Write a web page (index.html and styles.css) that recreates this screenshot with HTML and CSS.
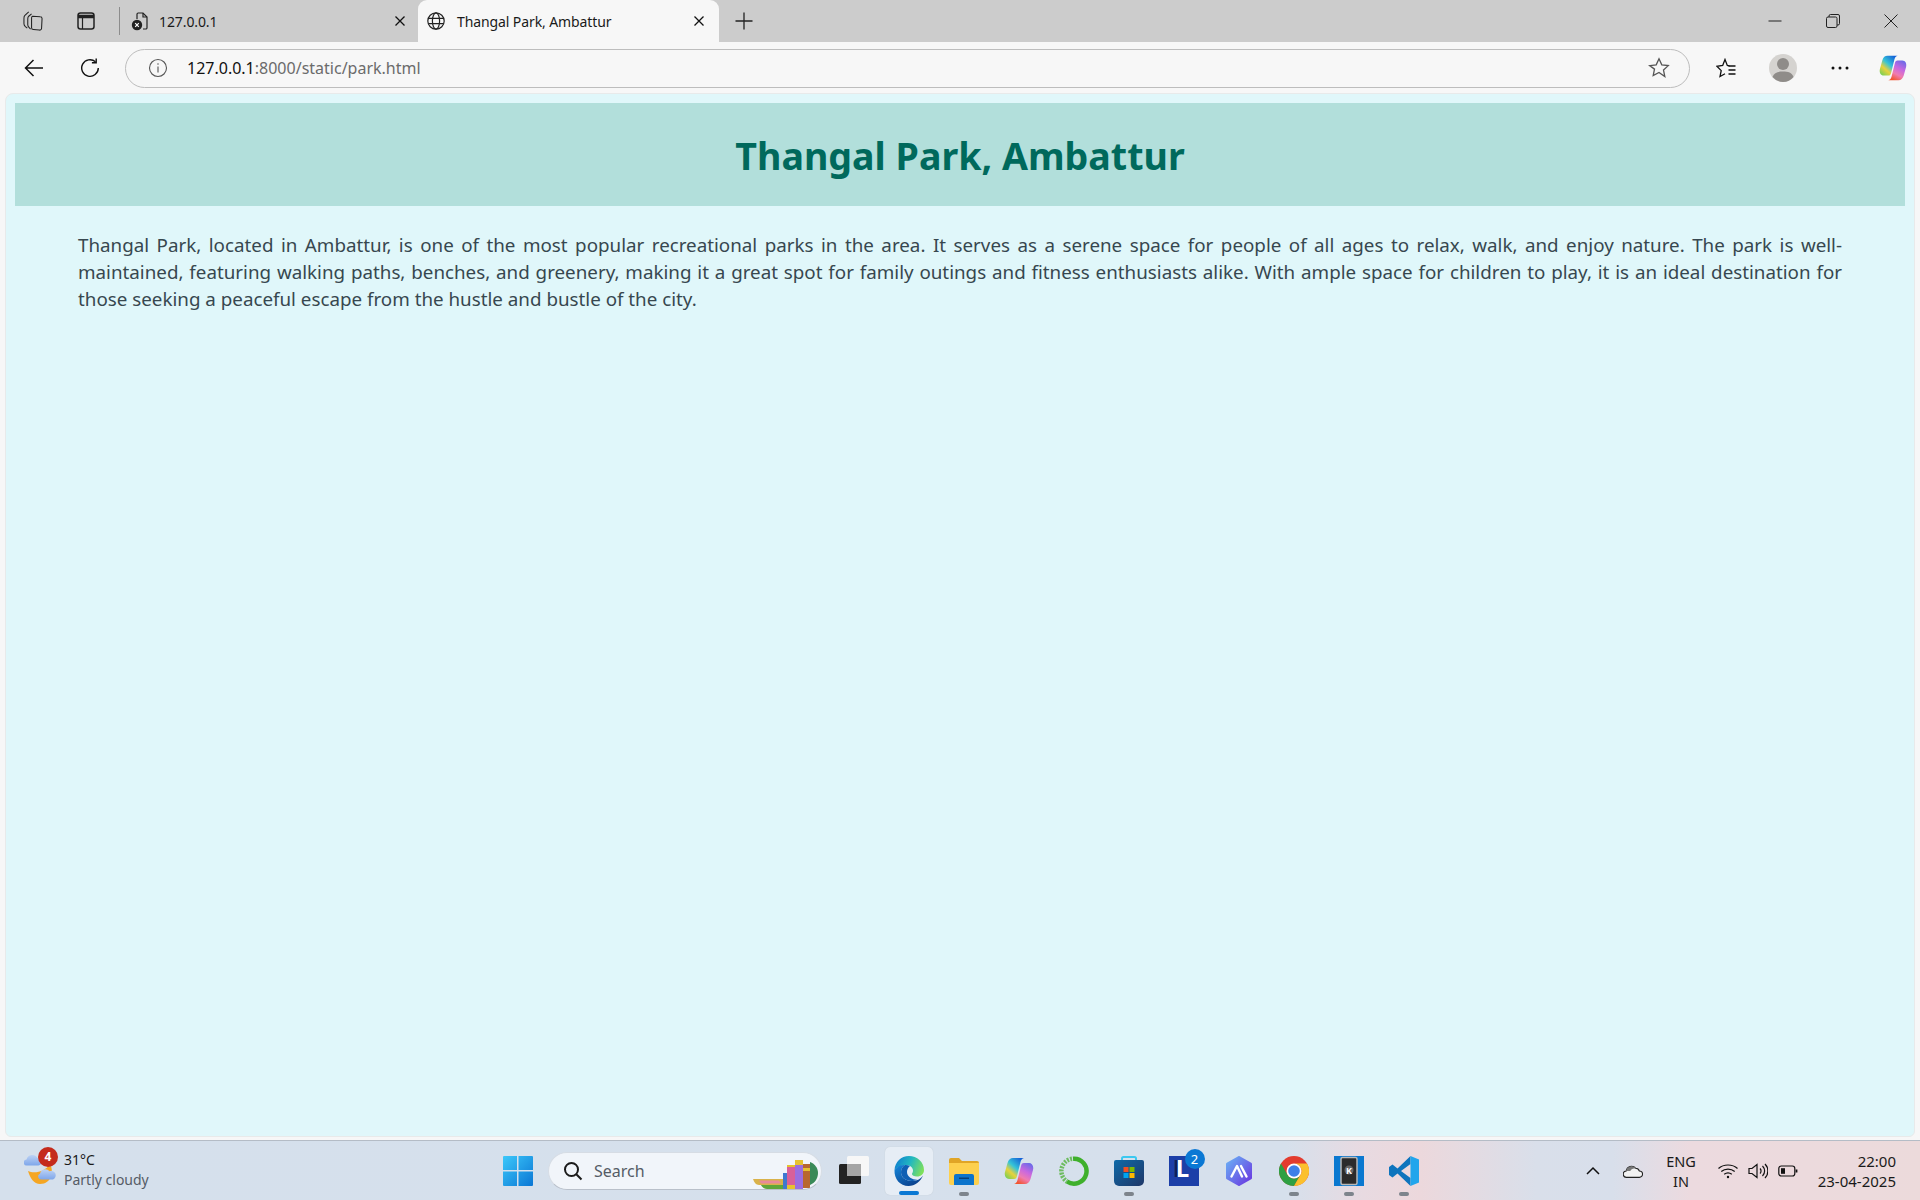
FILE: index.html
```html
<!DOCTYPE html>
<html lang="en">
<head>
<meta charset="utf-8">
<title>Thangal Park, Ambattur</title>
<link rel="stylesheet" href="styles.css">
</head>
<body>
<div class="tabstrip">
  <div class="strip-btn first"><svg class="i20" viewBox="0 0 21 21" fill="none" stroke="#222" stroke-width="1.100"><path d="M10 5.500 18 6a2 2 0 0 1 2 2l-.5 10a2 2 0 0 1-2.500 2l-6-.5a2 2 0 0 1-2-2V7.500a2 2 0 0 1 1-2z"/><path d="M9 3 6 5.500c-1 1-1 1.500-1 3v6c0 1.500.5 2 1.500 3L8 19"/><path d="M6 1 2 4.500C1 5.500 1 6 1 7.500v6c0 1.500.5 2 1.500 3l2 1.500"/></svg></div>
  <div class="strip-btn second"><svg class="i20" viewBox="0 0 20 20" fill="none" stroke="#222" stroke-width="1.500"><rect x="2" y="2" width="16" height="16" rx="2.500"/><path d="M2 5.500h16" stroke-width="3.500"/><path d="M6.500 6v12" stroke-width="1.200"/></svg></div>
  <div class="divider"></div>
  <div class="tab">
    <svg class="i20" viewBox="0 0 20 20" fill="none" stroke="#222" stroke-width="1.200"><path d="M6 8V3.200A1.200 1.200 0 0 1 7.200 2H12l4 4v10.800a1.200 1.200 0 0 1-1.200 1.200H12"/><path d="M12 2v4h4"/><circle cx="6" cy="14" r="5.200" fill="#222" stroke="none"/><path d="m4.200 12.200 3.600 3.600m0-3.600-3.600 3.600" stroke="#fff"/></svg>
    <span class="tab-title">127.0.0.1</span>
    <svg class="tab-x" viewBox="0 0 12 12" fill="none" stroke="#111" stroke-width="1.300"><path d="m1.500 1.500 9 9m0-9-9 9"/></svg>
  </div>
  <div class="tab active">
    <svg class="i20" viewBox="0 0 20 20" fill="none" stroke="#222" stroke-width="1.200"><circle cx="10" cy="10" r="8.200"/><ellipse cx="10" cy="10" rx="3.600" ry="8.200"/><path d="M2.300 7.400h15.400M2.300 12.600h15.400"/></svg>
    <span class="tab-title">Thangal Park, Ambattur</span>
    <svg class="tab-x" viewBox="0 0 12 12" fill="none" stroke="#111" stroke-width="1.300"><path d="m1.500 1.500 9 9m0-9-9 9"/></svg>
  </div>
  <div class="new-tab"><svg class="i20" viewBox="0 0 20 20" fill="none" stroke="#222" stroke-width="1.300"><path d="M10 1.500v17M1.500 10h17"/></svg></div>
  <div class="window-controls">
    <div class="win-btn"><svg class="i14" viewBox="0 0 14 14" fill="none" stroke="#222" stroke-width="1"><path d="M0.500 7h13"/></svg></div>
    <div class="win-btn"><svg class="i14" viewBox="0 0 14 14" fill="none" stroke="#222" stroke-width="1"><rect x="0.500" y="3" width="10.500" height="10.500" rx="1.500"/><path d="M3 3V2a1.500 1.500 0 0 1 1.500-1.500h7.500A1.500 1.500 0 0 1 13.500 2v7.500A1.500 1.500 0 0 1 12 11h-1"/></svg></div>
    <div class="win-btn"><svg class="i14" viewBox="0 0 14 14" fill="none" stroke="#222" stroke-width="1"><path d="m0.500 0.500 13 13m0-13-13 13"/></svg></div>
  </div>
</div>

<div class="toolbar">
  <div class="tool-btn"><svg class="i20" viewBox="0 0 20 20" fill="none" stroke="#111" stroke-width="1.500"><path d="M19 10H1.500M9.500 2 1.500 10l8 8"/></svg></div>
  <div class="tool-btn"><svg class="i20" viewBox="0 0 20 20" fill="none" stroke="#111" stroke-width="1.400"><path d="M15.500 3.800A8.300 8.300 0 1 0 18.300 10"/><path d="M16.200 0.500v4.300h-4.300"/></svg></div>
  <div class="address">
    <svg class="info" viewBox="0 0 20 20" fill="none" stroke="#555" stroke-width="1.100"><circle cx="10" cy="10" r="8.500"/><path d="M10 8.500v6M10 5.200v1.600"/></svg>
    <span class="url"><span class="host">127.0.0.1</span>:8000/static/park.html</span>
    <svg class="addr-star" viewBox="0 0 22 22" fill="none" stroke="#555" stroke-width="1.300"><path d="m11 1.800 2.800 6 6.500.8-4.800 4.500 1.300 6.500L11 15.400l-5.800 3.200 1.300-6.500L1.700 8.600l6.500-.8z"/></svg>
  </div>
  <div class="tool-right first-right"><svg class="i20" viewBox="0 0 20 20" fill="none" stroke="#111" stroke-width="1.300"><path d="M13.500 7.800 11.300 7.500 9 1.500 6.700 7.500 0.900 8.300 5.200 12.600 4 18.500 9 15.700"/><path d="M12.500 8h7M12.500 12h7M12.500 16h7"/></svg></div>
  <div class="tool-right"><svg class="i28" viewBox="0 0 28 28"><circle cx="14" cy="14" r="14" fill="#d5d3d0"/><circle cx="14" cy="10" r="6" fill="#8f8c89"/><path d="M3.500 23C5 18.500 9 17.500 14 17.500s9 1 10.500 5.500A14 14 0 0 1 14 28 14 14 0 0 1 3.500 23z" fill="#8f8c89"/></svg></div>
  <div class="tool-right"><svg class="i20" viewBox="0 0 20 20" fill="#111"><circle cx="3" cy="10" r="1.500"/><circle cx="10" cy="10" r="1.500"/><circle cx="17" cy="10" r="1.500"/></svg></div>
  <div class="tool-copilot">
    <svg class="i28" viewBox="0 0 30 30">
      <defs>
        <linearGradient id="cpa" x1="0" y1="1" x2="0.800" y2="0"><stop offset="0" stop-color="#5fcf5a"/><stop offset=".35" stop-color="#e8d23c"/><stop offset=".6" stop-color="#35c4d8"/><stop offset="1" stop-color="#1460d8"/></linearGradient>
        <linearGradient id="cpb" x1="0.800" y1="0" x2="0.300" y2="1"><stop offset="0" stop-color="#6a6ae8"/><stop offset=".4" stop-color="#c868e0"/><stop offset=".7" stop-color="#f07cb0"/><stop offset="1" stop-color="#f2552e"/></linearGradient>
      </defs>
      <path d="M21 28H10c2-.5 3-2 3.500-4L17 10c.5-2 1-3 3-3h5c3 0 5 3 4 7l-2.500 9C25.500 26.500 23.500 28 21 28z" fill="url(#cpb)"/>
      <path d="M9 2h11c-2 .5-3 2-3.500 4L13 20c-.5 2-1 3-3 3H5C2 23 0 20 1 16L3.500 7C4.500 3.500 6.500 2 9 2z" fill="url(#cpa)"/>
    </svg>
  </div>
</div>

<main class="viewport">
  <div class="page">
    <header class="banner"><h1 class="heading">Thangal Park, Ambattur</h1></header>
    <p class="copy">Thangal Park, located in Ambattur, is one of the most popular recreational parks in the area. It serves as a serene space for people of all ages to relax, walk, and enjoy nature. The park is well-maintained, featuring walking paths, benches, and greenery, making it a great spot for family outings and fitness enthusiasts alike. With ample space for children to play, it is an ideal destination for those seeking a peaceful escape from the hustle and bustle of the city.</p>
  </div>
</main>

<footer class="taskbar">
  <div class="weather">
    <div class="weather-icon">
      <svg class="i36" viewBox="0 0 36 36">
        <defs><linearGradient id="wc" x1="0" y1="0" x2="0" y2="1"><stop offset="0" stop-color="#bcd2f4"/><stop offset="1" stop-color="#7ea6ea"/></linearGradient></defs>
        <path d="M3 11.500a3 3 0 0 1-.5-6 6 6 0 0 1 11-1.500 3.800 3.800 0 0 1 1 7.500z" fill="url(#wc)"/>
        <path d="M4 17c6 3 17 1 22-7 4 7 2 20-10 20-6 0-10-6-12-13z" fill="#f5a623"/>
        <path d="M17 25.500a3 3 0 0 1-1-5.800 5.500 5.500 0 0 1 9.500-2.500 4.200 4.200 0 0 1 3.500 8.300z" fill="url(#wc)"/>
      </svg>
      <span class="weather-badge">4</span>
    </div>
    <div class="weather-text"><div class="temp">31°C</div><div class="cond">Partly cloudy</div></div>
  </div>
  <div class="apps">
    <div class="start"><svg class="i30" viewBox="0 0 30 30">
      <defs><linearGradient id="win" x1="0" y1="0" x2="1" y2="1"><stop offset="0" stop-color="#3cc8fa"/><stop offset="1" stop-color="#0a76d4"/></linearGradient></defs>
      <path d="M1 0h13v14H0V1a1 1 0 0 1 1-1zM15.500 0H29a1 1 0 0 1 1 1v13H15.500zM0 15.500h14V30H1a1 1 0 0 1-1-1zM15.500 15.500H30V29a1 1 0 0 1-1 1H15.500z" fill="url(#win)"/>
    </svg></div>
    <div class="search">
      <svg class="search-icon" viewBox="0 0 20 20" fill="none" stroke="#1b1b1b" stroke-width="2"><circle cx="8.500" cy="8.500" r="6.500"/><path d="m13.300 13.300 5.200 5.200"/></svg>
      <span class="search-label">Search</span>
      <svg class="books" viewBox="0 0 66 30">
        <path d="M0 20h30v6H6c-3 0-5-3-6-6z" fill="#d9b24a"/><path d="M6 21.500h20l2 3H8z" fill="#e88a9a"/>
        <path d="M8 26h22v4H14c-3 0-5-2-6-4z" fill="#5fa63a"/>
        <rect x="30" y="14" width="4" height="16" fill="#3f78d0"/><rect x="34" y="6" width="8" height="24" fill="#d8609a"/><rect x="34" y="6" width="8" height="2" fill="#e6c230"/><rect x="34" y="26" width="8" height="4" fill="#e6c230"/>
        <rect x="42" y="1" width="8" height="29" fill="#9a6ee0"/><rect x="42" y="1" width="8" height="5" fill="#e6c230"/>
        <rect x="50" y="5" width="7" height="24" fill="#b8672e"/><rect x="50" y="9" width="7" height="3" fill="#e6c230"/>
        <path d="M57 3c5 2 8 6 8 11s-3 10-8 12z" fill="#3a8a58"/>
      </svg>
    </div>
    <div class="app"><svg class="i30" viewBox="0 0 30 30">
      <rect x="8" y="0" width="22" height="20" rx="1.500" fill="#f7f7f7"/>
      <rect x="0" y="8" width="22" height="20" rx="1.500" fill="#222"/>
      <rect x="8" y="8" width="14" height="12" fill="#a5a5a5"/>
    </svg></div>
    <div class="app current"><svg class="i30" viewBox="0 0 30 30">
      <defs>
        <linearGradient id="edgea" x1="0" y1="0.300" x2="1" y2="0.600"><stop offset="0" stop-color="#0f7fd0"/><stop offset=".5" stop-color="#22b8c0"/><stop offset="1" stop-color="#7fe05a"/></linearGradient>
        <linearGradient id="edgeb" x1="0" y1="0" x2="0.700" y2="1"><stop offset="0" stop-color="#1488dc"/><stop offset="1" stop-color="#0a3f8c"/></linearGradient>
      </defs>
      <path d="M.5 14C1 6 7 0 15 0c8 0 15 6 15 14 0 4-3 6.500-7 6.500-3 0-5-1-5-2.500 0-1 1-1.500 1-3.500 0-3-3-5.500-6.500-5.500C7 9 3 11 .5 14z" fill="url(#edgea)"/>
      <path d="M.5 14C3 10.500 7 8.500 11 9c-2.500 1.500-4 4-4 7 0 5.500 5 9.500 12 9 4-.3 8-2 10-5.500-2.500 6-8 10.500-14.500 10.500C6 30 0 23 .5 14z" fill="url(#edgeb)"/>
      <path d="M11 9c-2.500 1.500-4 4-4 7 0 5.500 5 9.500 12 9 1.500-.2 3-.6 4.500-1.300C19 24 13 21 13 16c0-2.500 1-4.500 3-6-1.500-.8-3.300-1.200-5-1z" fill="#0f5fb4"/>
    </svg><span class="pill blue"></span></div>
    <div class="app"><svg class="i32" viewBox="0 0 32 32">
      <path d="M1 5a2 2 0 0 1 2-2h8l3 3h15a2 2 0 0 1 2 2v4H1z" fill="#e0a526"/>
      <path d="M1 8h30v20a2 2 0 0 1-2 2H3a2 2 0 0 1-2-2z" fill="#fdd04e"/>
      <path d="M6 21a2 2 0 0 1 2-2h16a2 2 0 0 1 2 2v9H6z" fill="#0c74cc"/><rect x="11" y="22.500" width="10" height="1.500" fill="#063f78"/>
    </svg><span class="pill"></span></div>
    <div class="app"><svg class="i30" viewBox="0 0 30 30">
      <path d="M21 28H10c2-.5 3-2 3.500-4L17 10c.5-2 1-3 3-3h5c3 0 5 3 4 7l-2.500 9C25.500 26.500 23.500 28 21 28z" fill="url(#cpb)"/>
      <path d="M9 2h11c-2 .5-3 2-3.500 4L13 20c-.5 2-1 3-3 3H5C2 23 0 20 1 16L3.500 7C4.500 3.500 6.500 2 9 2z" fill="url(#cpa)"/>
    </svg></div>
    <div class="app"><svg class="i30" viewBox="0 0 30 30" fill="none">
      <path d="M14 2.700A12.500 12.500 0 1 1 8 25.500" stroke="#3fb02c" stroke-width="4.500"/>
      <path d="M13 2.700A12.500 12.500 0 0 0 8 25.500" stroke="#5cb548" stroke-width="4.500" stroke-dasharray="2 1.200" opacity=".85"/>
    </svg></div>
    <div class="app"><svg class="i30" viewBox="0 0 30 30">
      <defs><linearGradient id="store" x1="0" y1="0" x2="1" y2="1"><stop offset="0" stop-color="#0f6aa8"/><stop offset="1" stop-color="#1f3768"/></linearGradient></defs>
      <path d="M8 5V2.500A1.500 1.500 0 0 1 9.500 1h11A1.500 1.500 0 0 1 22 2.500V5" fill="none" stroke="#3cc8f0" stroke-width="2"/>
      <path d="M0 6a2 2 0 0 1 2-2h26a2 2 0 0 1 2 2v19a5 5 0 0 1-5 5H5a5 5 0 0 1-5-5z" fill="url(#store)"/>
      <rect x="9.500" y="11" width="5" height="5" fill="#f25022"/><rect x="15.500" y="11" width="5" height="5" fill="#7fba00"/><rect x="9.500" y="17" width="5" height="5" fill="#00a4ef"/><rect x="15.500" y="17" width="5" height="5" fill="#ffb900"/>
    </svg><span class="pill"></span></div>
    <div class="app"><div class="l-icon"><span class="l-letter">L</span><span class="l-badge">2</span></div></div>
    <div class="app"><svg class="i30" viewBox="0 0 30 30">
      <defs><linearGradient id="mt" x1="0" y1="0" x2="1" y2="1"><stop offset="0" stop-color="#6ab0f5"/><stop offset="1" stop-color="#6a36e0"/></linearGradient></defs>
      <path d="M15 1.500 26.500 8v14L15 28.500 3.500 22V8z" fill="url(#mt)" stroke="url(#mt)" stroke-width="3" stroke-linejoin="round"/>
      <path d="M7.500 20.500 13 10l5 10.500M17 10l5.500 10.500" fill="none" stroke="#fff" stroke-width="2.400" stroke-linecap="round" stroke-linejoin="round"/>
    </svg></div>
    <div class="app"><svg class="i30" viewBox="0 0 30 30">
      <circle cx="15" cy="15" r="15" fill="#e33b2e"/>
      <path d="M2 7.500 8.500 18.750A7.500 7.500 0 0 0 21.500 18.750L15 30A15 15 0 0 1 2 7.500z" fill="#2ea043"/>
      <path d="M15 7.500H28A15 15 0 0 1 15 30L21.500 18.750A7.500 7.500 0 0 0 15 7.500z" fill="#fbc02d"/>
      <circle cx="15" cy="15" r="7.500" fill="#fff"/><circle cx="15" cy="15" r="5.800" fill="#3f7fe8"/>
    </svg><span class="pill"></span></div>
    <div class="app"><svg class="i30" viewBox="0 0 30 30">
      <rect width="30" height="30" fill="#0a78d0"/>
      <rect x="7" y="1.500" width="16" height="27" rx="1.500" fill="#2b2b2b" stroke="#b8b8b8" stroke-width="1.500"/>
      <circle cx="15" cy="14" r="4.500" fill="#666"/>
      <text x="15" y="17.500" class="kde-letter">K</text>
    </svg><span class="pill"></span></div>
    <div class="app"><svg class="i30" viewBox="0 0 30 30">
      <path d="M21.500 0 8.500 12.500 3.500 8.500 0 11v8l3.500 2.500 5-4L21.500 30zM21.500 8 12 15l9.500 7z" fill="#0e74bd" fill-rule="evenodd"/>
      <path d="M21.500 0 30 3.500v23L21.500 30z" fill="#22a5ec"/>
    </svg><span class="pill"></span></div>
  </div>
  <div class="tray">
    <div class="tray-chevron"><svg class="i14" viewBox="0 0 14 14" fill="none" stroke="#111" stroke-width="1.500"><path d="m1 10 6-6 6 6"/></svg></div>
    <div class="tray-cloud"><svg class="i20" viewBox="0 0 22 16"><path d="M4 15a3.500 3.500 0 0 1-.5-7A6 6 0 0 1 14 5a4.500 4.500 0 0 1 4 3 3.500 3.500 0 0 1 0 7z" fill="#f2f2f2" stroke="#222" stroke-width="1.200"/><path d="M3.500 8A6 6 0 0 1 14 5c-3 0-5 1-6 3z" fill="#777"/></svg></div>
    <div class="lang"><div>ENG</div><div>IN</div></div>
    <div class="tray-icons">
      <svg class="i20" viewBox="0 0 20 20" fill="none" stroke="#111" stroke-width="1.200"><path d="M0.500 7.500C5.500 2.800 14.500 2.800 19.500 7.500M3.300 10.500c3.700-3.300 9.700-3.300 13.400 0M6.200 13.300c2.200-1.700 5.400-1.700 7.600 0"/><circle cx="10" cy="16" r="1.200" fill="#111" stroke="none"/></svg>
      <svg class="i20" viewBox="0 0 20 20" fill="none" stroke="#111" stroke-width="1.200"><path d="M1 7.500h3L9 3.500v13l-5-4H1z"/><path d="M12 7.500a3.500 3.500 0 0 1 0 5M14.500 5a7 7 0 0 1 0 10M17 3a10 10 0 0 1 0 14"/></svg>
      <svg class="i20" viewBox="0 0 20 20" fill="none" stroke="#111" stroke-width="1.200"><rect x="0.800" y="5" width="16" height="10" rx="2.500"/><path d="M18.500 8.500v3" stroke-width="1.800"/><rect x="3" y="7.200" width="4" height="5.600" fill="#111" stroke="none"/></svg>
    </div>
    <div class="clock"><div>22:00</div><div>23-04-2025</div></div>
  </div>
</footer>
</body>
</html>
```

FILE: styles.css
```css
* { box-sizing: border-box; }
html, body { height: 100%; }
body {
  margin: 0;
  height: 100vh;
  display: flex;
  flex-direction: column;
  overflow: hidden;
  font-family: "Noto Sans", "Liberation Sans", sans-serif;
  color: #1a1a1a;
  background: #f7f7f7;
}
svg { display: block; flex: none; }
.i14 { width: 14px; height: 14px; }
.i20 { width: 20px; height: 20px; }
.i28 { width: 28px; height: 28px; }
.i30 { width: 30px; height: 30px; }
.i32 { width: 32px; height: 32px; }
.i36 { width: 36px; height: 36px; }

/* tab strip */
.tabstrip {
  height: 42px;
  flex: none;
  display: flex;
  align-items: stretch;
  background: #cccccc;
}
.strip-btn { display: flex; align-items: center; justify-content: center; width: 52px; }
.strip-btn.first { margin-left: 7px; }
.strip-btn.second { width: 54px; }
.divider { width: 1px; height: 28px; margin: 7px 11px 0 6px; background: #8c8c8c; }
.tab {
  width: 287px;
  display: flex;
  align-items: center;
  gap: 8px;
  padding: 0 12px 0 0;
  font-size: 14px;
  color: #1a1a1a;
}
.tab-title { flex: 1; white-space: nowrap; letter-spacing: -0.1px; }
.tab-x { width: 12px; height: 12px; }
.tab.active {
  width: 301px;
  background: #f7f7f7;
  border-radius: 9px 9px 0 0;
  padding: 0 14px 0 8px;
  gap: 11px;
}
.new-tab { width: 50px; display: flex; align-items: center; justify-content: center; }
.window-controls { margin-left: auto; display: flex; }
.win-btn { width: 58px; display: flex; align-items: center; justify-content: center; }

/* toolbar */
.toolbar {
  height: 51px;
  flex: none;
  display: flex;
  align-items: center;
  background: #f7f7f7;
  padding: 0 2px 0 12px;
}
.tool-btn { width: 44px; height: 44px; margin-right: 12px; display: flex; align-items: center; justify-content: center; }
.toolbar .tool-btn + .tool-btn { margin-right: 13px; }
.address {
  flex: 1;
  height: 39px;
  margin-top: 1px;
  display: flex;
  align-items: center;
  border: 1px solid #bdbdbd;
  border-radius: 20px;
  padding: 0 19px 0 22px;
}
.info { width: 20px; height: 20px; }
.url { margin-left: 19px; flex: 1; font-size: 16px; color: #6b6b6b; }
.host { color: #111; }
.addr-star { width: 22px; height: 22px; }
.tool-right { width: 57px; height: 44px; display: flex; align-items: center; justify-content: center; }
.first-right { margin-left: 7px; }
.tool-copilot { width: 50px; height: 44px; display: flex; align-items: center; justify-content: center; }

/* page */
.viewport {
  flex: 1;
  min-height: 0;
  padding: 0 5px 3px;
  background: #f7f7f7;
}
.page {
  height: 100%;
  background: #e0f7fa;
  border: 1px solid #e8eaea;
  border-radius: 8px 8px 6px 6px;
  padding: 9px 9px 0;
}
.banner {
  height: 103px;
  padding-top: 3px;
  display: flex;
  align-items: center;
  justify-content: center;
  background: #b2dfdb;
}
.heading {
  margin: 0;
  font-size: 37.600px;
  line-height: 1;
  font-weight: 700;
  color: #00695c;
}
.copy {
  margin: 26px 0 0;
  padding: 0 63px;
  font-size: 18.800px;
  line-height: 27px;
  text-align: justify;
  color: #37474f;
}

/* taskbar */
.taskbar {
  height: 60px;
  flex: none;
  display: grid;
  grid-template-columns: 490px auto 1fr;
  align-items: stretch;
  border-top: 1px solid #b4bcc6;
  background: linear-gradient(90deg, #d5e0ec 0%, #d6e0ec 67%, #e8dae1 71%, #ecd8dc 74%, #d9dfea 80%, #d8dfeb 84%, #ecdadf 88%, #ecdadb 100%);
}
.weather { display: flex; align-items: center; padding-left: 24px; }
.weather-icon { position: relative; width: 36px; height: 36px; margin-top: 3px; }
.weather-badge {
  position: absolute;
  left: 14px;
  top: -7px;
  width: 20px;
  height: 20px;
  border-radius: 50%;
  background: #c42b1c;
  color: #fff;
  font-size: 12px;
  font-weight: 700;
  line-height: 20px;
  text-align: center;
}
.weather-text { margin: -2px 0 0 4px; font-size: 14px; line-height: 20px; }
.temp { color: #1a1a1a; }
.cond { color: #555c66; }
.apps { display: flex; align-items: center; }
.start { width: 58px; padding-left: 13px; }
.search {
  width: 274px;
  height: 38px;
  display: flex;
  align-items: center;
  background: #f1f5fa;
  border: 1px solid #d6dce4;
  border-bottom-color: #b9c0ca;
  border-radius: 19px;
  padding-left: 14px;
  overflow: hidden;
  margin-right: 4px;
}
.search-icon { width: 20px; height: 20px; }
.search-label { margin-left: 11px; flex: 1; font-size: 16px; color: #555c66; }
.books { width: 66px; height: 30px; margin: 6px 2px 0 0; }
.app {
  position: relative;
  width: 55px;
  height: 48px;
  display: flex;
  align-items: center;
  justify-content: center;
}
.current { background: #e6edf5; border-radius: 5px; margin: 0 3.500px; width: 48px; box-shadow: 0 0 1px #b9c0ca; }
.pill {
  position: absolute;
  left: 50%;
  bottom: -1px;
  width: 10px;
  height: 4px;
  margin-left: -5px;
  border-radius: 2px;
  background: #7d848c;
}
.pill.blue { width: 20px; margin-left: -10px; bottom: 0; background: #0a78d4; }
.l-icon {
  position: relative;
  width: 30px;
  height: 30px;
  padding: 0 2px 5px 0;
  background: #1c3fa8;
  display: flex;
  align-items: center;
  justify-content: center;
}
.l-letter { color: #fff; font-size: 24px; font-weight: 700; line-height: 1; text-shadow: -3px 0 #0d1f5c; }
.l-badge {
  position: absolute;
  right: -6px;
  top: -7px;
  width: 20px;
  height: 20px;
  border-radius: 50%;
  background: #0a78d4;
  color: #fff;
  font-size: 13px;
  line-height: 20px;
  text-align: center;
}
.kde-letter { fill: #fff; font-size: 9px; font-weight: 700; text-anchor: middle; font-family: "Noto Sans", sans-serif; }
.tray { display: flex; align-items: center; justify-content: flex-end; font-size: 14.500px; color: #1a1a1a; }
.tray-chevron { width: 36px; display: flex; justify-content: center; }
.tray-cloud { width: 44px; display: flex; justify-content: center; }
.lang { width: 52px; margin-right: 6px; text-align: center; line-height: 20px; }
.tray-icons { width: 90px; padding: 0 5px; display: flex; justify-content: space-between; }
.clock { width: 117px; padding-right: 24px; text-align: right; line-height: 20px; white-space: nowrap; font-size: 15px; }
```
